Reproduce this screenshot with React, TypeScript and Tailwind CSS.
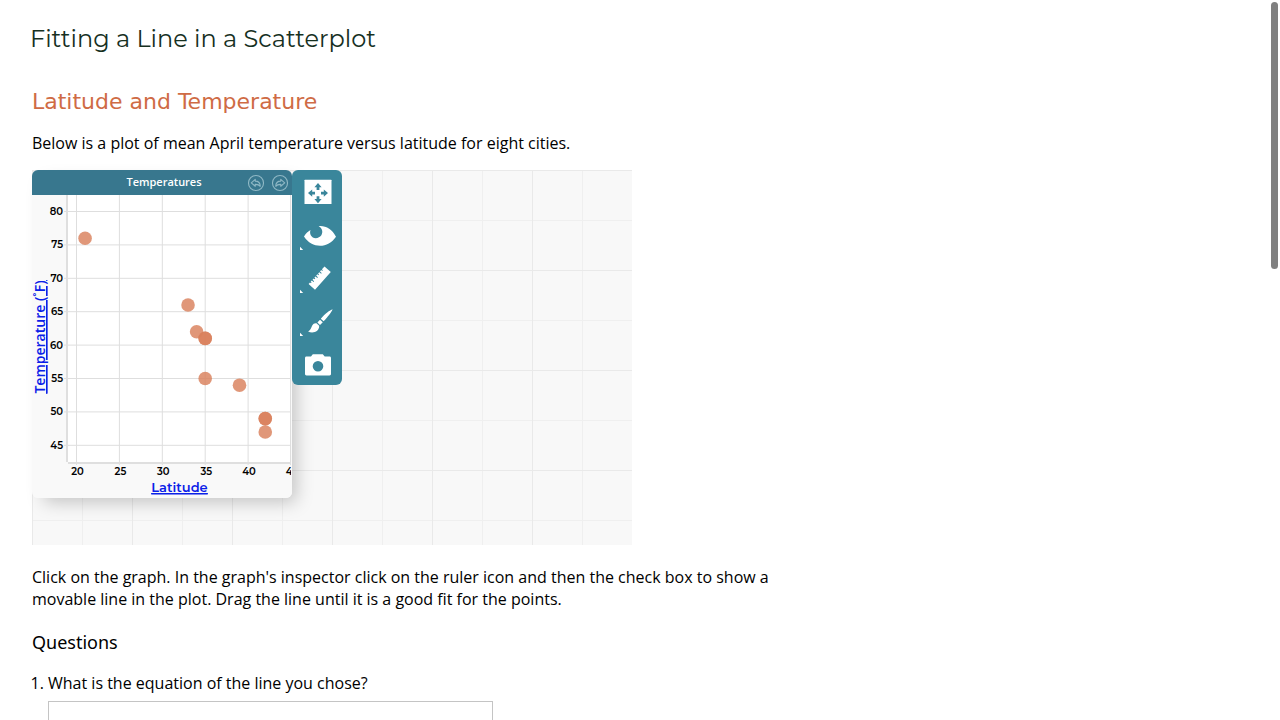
import type { ReactNode } from "react";

const LEFT = 44.5;
const TOP = 16.5;
const xPos = (v: number) => LEFT + (v - 20) * 8.58;
const yPos = (v: number) => TOP + (80 - v) * 6.68;

const xTicks = [20, 25, 30, 35, 40, 45];
const yTicks = [80, 75, 70, 65, 60, 55, 50, 45];

const cities = [
  { lat: 21, temp: 76 },
  { lat: 33, temp: 66 },
  { lat: 34, temp: 62 },
  { lat: 35, temp: 61 },
  { lat: 35, temp: 61 },
  { lat: 35, temp: 55 },
  { lat: 39, temp: 54 },
  { lat: 42, temp: 49 },
  { lat: 42, temp: 49 },
  { lat: 42, temp: 47 },
];

function Scatterplot() {
  return (
    <svg viewBox="0 0 260 303" className="block w-full" role="img" aria-label="Temperature versus latitude">
      <rect width="260" height="303" fill="#f9f9f9" />
      <rect x="35" y="0" width="224" height="267" fill="#fff" />
      <g stroke="#dedede" strokeWidth="1">
        {yTicks.map((t) => (
          <line key={t} x1="32" x2="259" y1={yPos(t)} y2={yPos(t)} />
        ))}
        {xTicks.slice(0, 5).map((t) => (
          <line key={t} y1="0" y2="270" x1={xPos(t)} x2={xPos(t)} />
        ))}
        <line x1="258.5" x2="258.5" y1="0" y2="270" />
      </g>
      <path d="M35 0V267M36 268H259" stroke="#dfdfdf" strokeWidth="2" fill="none" />
      <g fontSize="10" fontWeight="600" fill="#000" className="font-[Montserrat,Inter,sans-serif]">
        {yTicks.map((t) => (
          <text key={t} x="31" y={yPos(t) + 3.5} textAnchor="end">{t}</text>
        ))}
        {xTicks.map((t) => (
          <text key={t} x={xPos(t) + 1} y="280" textAnchor="middle">{t}</text>
        ))}
      </g>
      <g fill="#d9805c" fillOpacity="0.82">
        {cities.map((c, i) => (
          <circle key={i} cx={xPos(c.lat)} cy={yPos(c.temp)} r="6.8" />
        ))}
      </g>
      <rect x="259" width="1" height="303" fill="#f9f9f9" />
      <g fill="#0a20e8" fontWeight="600" className="underline">
        <a href="#latitude">
          <text x="147.5" y="297" textAnchor="middle" fontSize="13" className="font-[Montserrat,Inter,sans-serif]">
            Latitude
          </text>
        </a>
        <a href="#temperature">
          <text transform="translate(13 142) rotate(-90)" textAnchor="middle" fontSize="14" className="font-['Open_Sans',sans-serif]">
            Temperature (˚F)
          </text>
        </a>
      </g>
    </svg>
  );
}

function HistoryButton({ label, flip }: { label: string; flip?: boolean }) {
  return (
    <button type="button" aria-label={label} className="size-4">
      <svg viewBox="0 0 17 17" className="size-full overflow-visible" fill="none" stroke="#8fb8c5" strokeWidth="1.2" strokeLinejoin="round">
        <circle cx="8.5" cy="8.5" r="8" />
        <path transform={flip ? "matrix(-1 0 0 1 17 0)" : undefined} d="M3.5 8.3 7.7 4.6V6.5C11 6.5 13 8.5 13 12C11.7 10.3 10.3 9.9 7.7 10V12Z" />
      </svg>
    </button>
  );
}

function Tool({ label, menu, children }: { label: string; menu?: boolean; children: ReactNode }) {
  return (
    <button type="button" aria-label={label} className="block h-[43px] w-full">
      <svg viewBox="0 0 50 43" className="block size-full" fill="#fff">
        {children}
        {menu && <path d="M8 33.8 11.2 37H8Z" />}
      </svg>
    </button>
  );
}

function Inspector() {
  return (
    <div className="w-[50px] shrink-0 overflow-hidden rounded-md bg-[#3a869b]">
      <Tool label="Resize">
        <path d="M13 9.8H39Q39.5 9.8 39.5 10.3V34H12.5V10.3Q12.5 9.8 13 9.8Z" />
        <path fill="#3a869b" d="M26 13 29.6 17.2H27.4V20H24.6V17.2H22.4ZM26 33.2 22.4 29H24.6V26.2H27.4V29H29.6ZM16 23.1 20.2 19.5V21.7H23V24.5H20.2V26.7ZM36 23.1 31.8 26.7V24.5H29V21.7H31.8V19.5Z" />
      </Tool>
      <Tool label="Hide and show" menu>
        <path d="M12 23.5C14 20.5 16 18.5 18.5 17.1C17.1 21 19.4 25.2 23.7 25.2C28.5 25.2 31.5 20.8 29.8 16.6C29.2 14.9 28 13.7 26.6 13.2C34 12.5 40 16.5 44 23.7C36 35.8 20 35.8 12 23.5Z" />
      </Tool>
      <Tool label="Measure" menu>
        <path d="M32.5 10.5 38.8 16 23 33.8 16.6 28 18 26.5 19 27.3 19.6 26.6 18.7 25.7 19.8 24.5 21.6 26 22.2 25.3 20.5 23.7 21.7 22.4 22.7 23.3 23.3 22.6 22.4 21.6 23.5 20.4 25.3 21.9 25.9 21.2 24.2 19.6 25.4 18.3 26.4 19.2 27 18.5 26.1 17.5 27.3 16.2 29.1 17.7 29.7 17 28 15.4 29.2 14.1 30.2 15 30.8 14.3 29.9 13.3Z" />
      </Tool>
      <Tool label="Format" menu>
        <path d="M40.6 10.3C37.8 11.1 33 15.1 28.8 19.7L31.6 22.3C35.8 18.1 39.5 13.2 40.6 10.3ZM28 20.7 25.4 23.6 28 26 30.8 23.2ZM24.5 24.2C20.5 23.6 20 27.4 18.6 30.1C18 31.4 17 32.1 16 32.3C20.5 35.2 27.5 32.6 27.2 26.8Z" />
      </Tool>
      <Tool label="Export image">
        <path fillRule="evenodd" d="M19 14.5 20.8 12.3H30.8L32.7 14.5H37.5C38.5 14.5 39 15.1 39 16V31.8C39 32.8 38.5 33.5 37.5 33.5H14.5C13.5 33.5 13 32.8 13 31.8V16C13 15.1 13.5 14.5 14.5 14.5ZM26 19A5.3 5.3 0 1 0 26 29.6A5.3 5.3 0 1 0 26 19Z" />
      </Tool>
    </div>
  );
}

export default function App() {
  return (
    <div className="relative h-screen overflow-hidden bg-white pl-8 font-['Open_Sans','Noto_Sans',sans-serif] text-base leading-[22px] text-black">
      <h1 className="-ml-0.5 pt-[21px] font-[Montserrat,Inter,sans-serif] text-2xl leading-9 text-[#16301f]">Fitting a Line in a Scatterplot</h1>
      <main className="max-w-[768px] pr-4">
        <h2 className="mt-[31px] font-[Verdana,'DejaVu_Sans',sans-serif] text-[22px] leading-7 text-[#cf6b45]">Latitude and Temperature</h2>
        <p className="mt-4">Below is a plot of mean April temperature versus latitude for eight cities.</p>

        <section aria-label="Data workspace" className="mt-4 flex h-[375px] max-w-[600px] items-start bg-[#f8f8f8] bg-[linear-gradient(#e9e9e9_1px,transparent_1px),linear-gradient(90deg,#e9e9e9_1px,transparent_1px),linear-gradient(#efefef_1px,transparent_1px),linear-gradient(90deg,#efefef_1px,transparent_1px)] bg-[size:100px_100px,100px_100px,50px_50px,50px_50px]">
          <div className="w-[260px] shrink-0 overflow-hidden rounded-md shadow-[8px_8px_18px_-4px_rgba(0,0,0,0.22)]">
            <div className="grid h-[25px] grid-cols-[1fr_auto_1fr] items-center bg-[#38778e] pr-1 pl-2">
              <span className="col-start-2 pb-0.5 text-[11px] leading-4 font-semibold text-white">Temperatures</span>
              <div className="flex items-center justify-end gap-2">
                <HistoryButton label="Undo" />
                <HistoryButton label="Redo" flip />
              </div>
            </div>
            <Scatterplot />
          </div>
          <Inspector />
        </section>

        <p className="mt-[21px]">
          Click on the graph. In the graph's inspector click on the ruler icon and then the check box to show a movable line in the plot. Drag the line until it is a good fit for the points.
        </p>
        <h3 className="mt-5 font-['Noto_Sans',sans-serif] text-lg leading-6">Questions</h3>
        <ol className="mt-[18px] list-decimal pl-4">
          <li>
            <label htmlFor="answer">What is the equation of the line you chose?</label>
            <textarea id="answer" className="mt-[7px] block h-20 w-[445px] max-w-full resize-none border border-[#c4c4c4] bg-white p-2" />
          </li>
        </ol>
      </main>
      <div className="absolute top-0.5 right-0.5 h-[267px] w-[7px] rounded-full bg-[#808080]" />
    </div>
  );
}
